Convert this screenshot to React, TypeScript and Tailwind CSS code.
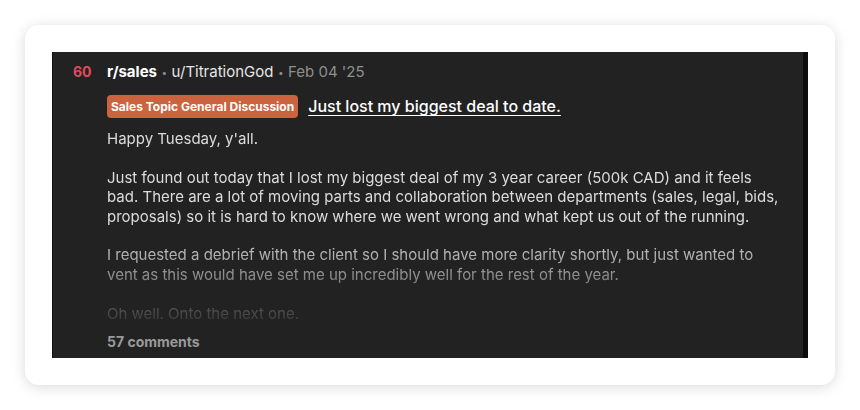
export default function App() {
  const font = { fontFamily: 'Inter, "Noto Sans", sans-serif' };
  return (
    <div className="min-h-screen w-full bg-white p-[25px]" style={font}>
      <div className="h-[360px] w-[810px] rounded-[14px] bg-white p-[27px] shadow-[0_2px_14px_rgba(0,0,0,0.15)]">
        <div className="flex h-[306px] border-l border-r-[5px] border-l-[#121212] border-r-[#0d0d0d] bg-[#222222] pl-5 pr-4 pt-[10px]">
          <div className="w-[34px] shrink-0 text-[14px] font-bold leading-[20px] text-[#e04a5e]">
            60
          </div>
          <div className="flex min-w-0 flex-1 flex-col">
            <div className="flex items-center gap-[4.5px] text-[15px] leading-[20px]">
              <span className="font-bold text-white">r/sales</span>
              <span className="text-[10px] text-[#8a8a8a]">•</span>
              <span className="text-[#e6e6e6]">u/TitrationGod</span>
              <span className="text-[10px] text-[#8a8a8a]">•</span>
              <span className="text-[#8f8f8f]">Feb 04 '25</span>
            </div>
            <div className="mt-[13px] flex items-center gap-[10px]">
              <span className="rounded-[4px] bg-[#cb633e] px-[4px] text-[12px] font-bold leading-[23px] text-white">
                Sales Topic General Discussion
              </span>
              <span className="text-[16px] font-medium leading-[23px] text-white underline decoration-1 underline-offset-[3px]">
                Just lost my biggest deal to date.
              </span>
            </div>
            <div className="mt-[11px] whitespace-pre-line text-[15px] leading-[19.4px] text-[#dcdcdc] [mask-image:linear-gradient(to_bottom,#000_52%,rgba(0,0,0,0.12)_100%)]">
              {"Happy Tuesday, y'all.\n\nJust found out today that I lost my biggest deal of my 3 year career (500k CAD) and it feels bad. There are a lot of moving parts and collaboration between departments (sales, legal, bids, proposals) so it is hard to know where we went wrong and what kept us out of the running.\n\nI requested a debrief with the client so I should have more clarity shortly, but just wanted to vent as this would have set me up incredibly well for the rest of the year.\n\nOh well. Onto the next one."}
            </div>
            <div className="mt-[9px] text-[14px] font-bold leading-[20px] text-[#9a9a9a]">
              57 comments
            </div>
          </div>
        </div>
      </div>
    </div>
  );
}
